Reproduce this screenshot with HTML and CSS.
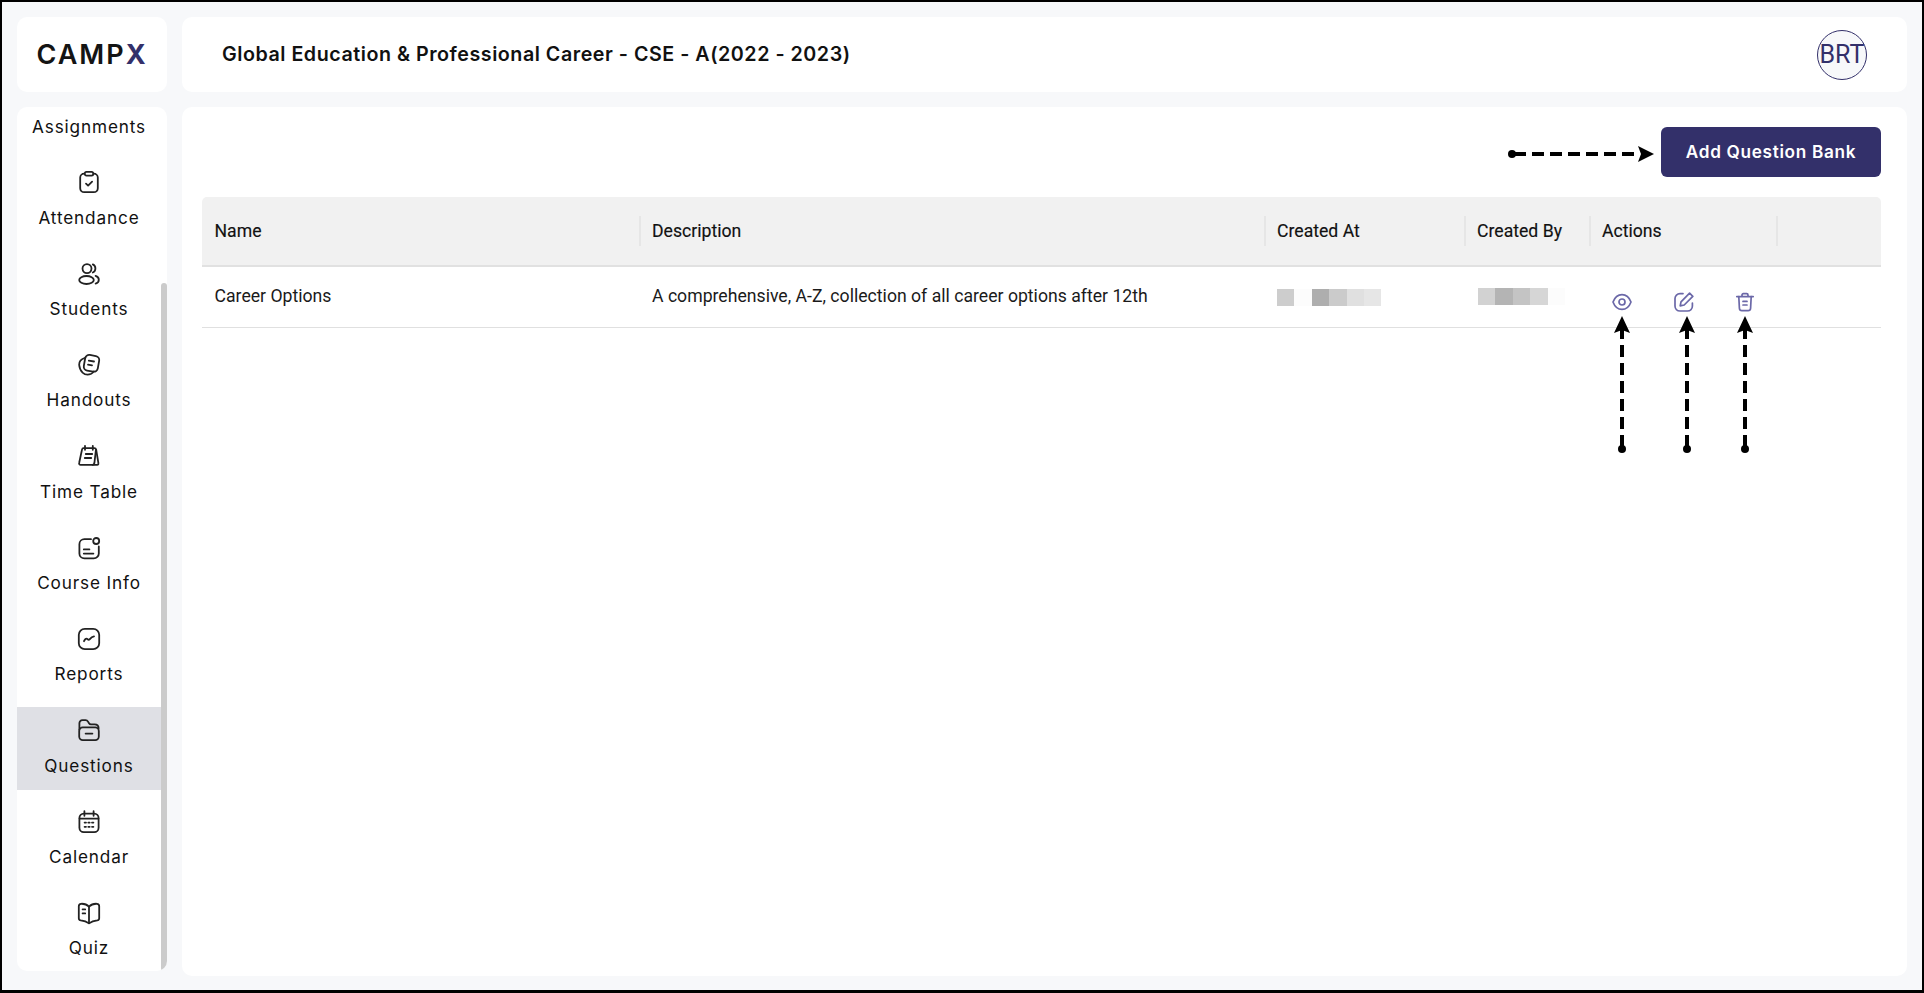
FILE: index.html
```html
<!DOCTYPE html>
<html lang="en">
<head>
<meta charset="utf-8">
<title>Question Bank</title>
<link rel="stylesheet" href="styles.css">
</head>
<body>
<div class="frame">
  <div class="logo-card"><span class="logo">CAMP<span class="logo-x">X</span></span></div>
  <header class="top-card">
    <h1 class="title">Global Education &amp; Professional Career - CSE - A(2022 - 2023)</h1>
    <div class="avatar">BRT</div>
  </header>
  <aside class="side-card">
    <nav class="nav">
      <a class="nav-item"><span class="nav-icon"></span><span class="nav-label">Assignments</span></a>
      <a class="nav-item">
        <svg class="nav-icon" viewBox="0 0 24 24"><rect x="3.2" y="3.6" width="17.6" height="18.6" rx="4"/><rect x="7.8" y="1.8" width="8.4" height="3.8" rx="1.6" class="solid"/><path d="M9 13.6l2.1 2 4-4"/></svg>
        <span class="nav-label">Attendance</span></a>
      <a class="nav-item">
        <svg class="nav-icon" viewBox="0 0 24 24"><circle cx="10" cy="6.6" r="4.5"/><ellipse cx="9.5" cy="18" rx="7.3" ry="4"/><path d="M15.8 2.4a4.4 4.4 0 0 1 2.6 4.1 4.4 4.4 0 0 1-2.6 4"/><path d="M18.6 13.8c2 .6 3.2 2.2 3.2 3.9s-1.2 3.3-3.2 3.9"/></svg>
        <span class="nav-label">Students</span></a>
      <a class="nav-item">
        <svg class="nav-icon" viewBox="0 0 24 24"><rect x="7.4" y="2.4" width="14.2" height="15.8" rx="4" transform="rotate(10 14.5 10.3)"/><path d="M7.6 5C4.4 6 2 8 2.2 12c.2 3 1.4 5.6 3.4 7.6 2 1.9 5.6 2.6 8.6 1.2 1.2-.6 2-1.4 2.6-2.4"/><path d="M11.8 7.6l5.2.9M11 11.6l4 .7"/></svg>
        <span class="nav-label">Handouts</span></a>
      <a class="nav-item">
        <svg class="nav-icon" viewBox="0 0 24 24"><path d="M6.4 4.200h11c1 0 1.600.8 1.800 1.600l2.200 13.400c.2.900-.4 1.600-1.200 1.600H3.600c-1.100 0-1.800-1-1.400-2L5 5.600c.2-.8.600-1.400 1.400-1.400z"/><path d="M8 1.800v4M15.800 1.800v4M18.900 6l-1.500 13c-.2 1-.8 1.800-1.800 1.800M8.800 10h6.400M7.800 14h6.400"/></svg>
        <span class="nav-label">Time Table</span></a>
      <a class="nav-item">
        <svg class="nav-icon" viewBox="0 0 24 24"><path d="M14 3.2H7.400a5 5 0 0 0-5 5v9.200a5 5 0 0 0 5 5h9.400a5 5 0 0 0 5-5v-7"/><circle cx="19.200" cy="5" r="3"/><path d="M6.800 13.400h5.600M6.800 17.600h9.600"/></svg>
        <span class="nav-label">Course Info</span></a>
      <a class="nav-item">
        <svg class="nav-icon" viewBox="0 0 24 24"><rect x="1.800" y="1.800" width="20.400" height="20.400" rx="6"/><path d="M7 14.200c1-2.200 2-3 3-2.400 1 .7 1.600 1.600 2.600.6 1-1.200 2-2.600 4.400-3"/></svg>
        <span class="nav-label">Reports</span></a>
      <a class="nav-item nav-item-active">
        <svg class="nav-icon" viewBox="0 0 24 24"><path d="M2.400 11.600V5.200c0-1.800 1.200-3 3-3h3.200c1.200 0 1.800.4 2.400 1.400l1 1.600c.5.8 1 1.200 2 1.200h3.600c2.400 0 4 1.400 4 3.800"/><rect x="2.200" y="9.400" width="19.600" height="12.800" rx="3.600"/><path d="M8.600 15.600h6.800"/></svg>
        <span class="nav-label">Questions</span></a>
      <a class="nav-item">
        <svg class="nav-icon" viewBox="0 0 24 24"><rect x="2.400" y="3.600" width="19.200" height="18.600" rx="4.400"/><path d="M7.400 1.200v4.600M16.600 1.200v4.600M2.600 8.600h18.800"/><path class="dots" d="M7.600 12.600h1.400M11.300 12.600h1.400M15 12.600h1.400M7.600 16.800h1.400M11.300 16.800h1.400M15 16.800h1.400"/></svg>
        <span class="nav-label">Calendar</span></a>
      <a class="nav-item">
        <svg class="nav-icon" viewBox="0 0 24 24"><path d="M12 5.600C10 3.600 7 2.600 4 2.800c-1.400.1-2.200 1-2.200 2.400v12c0 1.200.7 2 2 2.200 3 .3 5.800 1.200 8.200 3 2.400-1.800 5.200-2.700 8.200-3 1.300-.2 2-1 2-2.200v-12c0-1.400-.8-2.300-2.200-2.400-3-.2-6 .8-8 2.800z"/><path d="M12 5.600v16.600M5.600 8.400h2.600M5.600 12.400h2.600"/></svg>
        <span class="nav-label">Quiz</span></a>
    </nav>
    <div class="scroll-track"><div class="scroll-thumb"></div></div>
  </aside>
  <main class="main-card">
    <div class="toolbar"><button class="add-btn">Add Question Bank</button></div>
    <div class="table">
      <div class="table-row table-head">
        <div class="cell cell-first">Name</div>
        <div class="cell"><span class="head-label">Description</span></div>
        <div class="cell"><span class="head-label">Created At</span></div>
        <div class="cell"><span class="head-label">Created By</span></div>
        <div class="cell"><span class="head-label">Actions</span></div>
        <div class="cell"><span class="head-label"></span></div>
      </div>
      <div class="table-row table-body">
        <div class="cell cell-first">Career Options</div>
        <div class="cell cell-body">A comprehensive, A-Z, collection of all career options after 12th</div>
        <div class="cell cell-body">
          <div class="blur blur-at"><i class="px p1"></i><i class="px p2"></i><i class="px p3"></i><i class="px p4"></i><i class="px p5"></i><i class="px p6"></i></div>
        </div>
        <div class="cell cell-body">
          <div class="blur blur-by"><i class="px p7"></i><i class="px p8"></i><i class="px p9"></i><i class="px p10"></i><i class="px p2"></i></div>
        </div>
        <div class="cell-actions">
          <svg class="act" viewBox="0 0 20 20"><path d="M1 10C2.800 5.200 6 2.600 10 2.600S17.200 5.200 19 10C17.200 14.800 14 17.400 10 17.400S2.800 14.800 1 10z"/><circle cx="10" cy="10" r="3"/></svg>
          <svg class="act" viewBox="0 0 20 20"><path d="M9 1.600H6C3.200 1.600 1 3.800 1 6.600v7.400c0 2.800 2.200 5 5 5h7.400c2.800 0 5-2.200 5-5V11"/><path d="M15.600 1.200l3.200 3.200-8.600 8.600-4 .8.800-4z"/></svg>
          <svg class="act" viewBox="0 0 20 20"><path d="M1.800 4.600h16.400M7 4.400V3c0-.8.600-1.300 1.300-1.300h3.400c.7 0 1.300.5 1.300 1.300v1.400"/><path d="M3.800 4.600l.6 11.600c.1 1.500 1 2.400 2.500 2.400h6.200c1.500 0 2.400-.9 2.500-2.400l.6-11.600"/><path d="M8 9.400h4M8 13h4"/></svg>
        </div>
      </div>
    </div>
  </main>
  <svg class="annotations" viewBox="0 0 1924 993" width="1924" height="993">
    <g class="arrow-line">
      <path d="M1514 154H1640"/>
      <path d="M1622 447V330"/>
      <path d="M1687 447V330"/>
      <path d="M1745 447V330"/>
    </g>
    <g class="arrow-fill">
      <circle cx="1512" cy="154" r="4"/>
      <path d="M1654 154L1638 146L1641 154L1638 162z"/>
      <circle cx="1622" cy="449" r="4"/>
      <path d="M1622 316L1614 333L1622 330L1630 333z"/>
      <circle cx="1687" cy="449" r="4"/>
      <path d="M1687 316L1679 333L1687 330L1695 333z"/>
      <circle cx="1745" cy="449" r="4"/>
      <path d="M1745 316L1737 333L1745 330L1753 333z"/>
    </g>
  </svg>
</div>
</body>
</html>
```
FILE: styles.css
```css
* { box-sizing: border-box; }
html, body { margin: 0; padding: 0; }
body { width: 1924px; height: 993px; overflow: hidden; font-family: "Roboto", sans-serif; }

.frame {
  position: relative;
  width: 1924px;
  height: 993px;
  background: #f7f8fa;
  border-style: solid;
  border-color: #000;
  border-width: 2px 2px 3px 2px;
  padding: 15px 15px 14px 15px;
  display: grid;
  grid-template-columns: 150px 1fr;
  grid-template-rows: 75px 1fr;
  gap: 15px;
}

.logo-card, .top-card, .side-card, .main-card { background: #fff; border-radius: 10px; }

.logo-card { display: flex; align-items: center; justify-content: center; }
.logo { font-family: "Inter", sans-serif; font-weight: 600; font-size: 27px; letter-spacing: 2px; color: #141414; line-height: 1; }
.logo-x { color: #33306a; font-weight: 700; }

.top-card { display: flex; align-items: center; justify-content: space-between; padding: 0 40px 2px 40px; }
.title { margin: 0; font-family: "Inter", sans-serif; font-weight: 600; font-size: 19.7px; letter-spacing: 0.52px; color: #111; }
.avatar {
  width: 50px; height: 50px; border-radius: 50%; margin-top: 2px;
  border: 1px solid #33306a; background: #f7f8fa; color: #33306a;
  font-size: 25px; display: flex; align-items: center; justify-content: center;
}

.side-card { display: flex; overflow: hidden; margin-bottom: 5px; }
.nav { flex: 1; min-width: 0; overflow: hidden; display: flex; flex-direction: column; gap: 9px; }
.nav-item {
  flex: none;
  height: 82.33px;
  display: flex; flex-direction: column; align-items: center;
  padding-top: 11px;
  gap: 11.5px;
  color: #111;
}
.nav-item:first-child { margin-top: -39px; }
.nav-item-active { background: #dfe0e5; }
.nav-icon { width: 24px; height: 24px; flex: none; fill: none; stroke: #222; stroke-width: 1.8; stroke-linecap: round; stroke-linejoin: round; }
.nav-icon .solid { fill: #fff; }
.nav-item-active .nav-icon .solid { fill: #dfe0e5; }
.nav-icon .dots { stroke-width: 1.8; }
.nav-label { font-family: "Inter", sans-serif; font-size: 17.2px; line-height: 24px; letter-spacing: 0.85px; white-space: nowrap; }

.scroll-track { width: 6px; flex: none; padding-top: 176px; }
.scroll-thumb { height: 100%; background: #cbcbcb; border-radius: 3px; }

.main-card { padding: 20px 26px 0 20px; display: flex; flex-direction: column; min-width: 0; }
.toolbar { display: flex; justify-content: flex-end; height: 50px; margin-bottom: 20px; }
.add-btn {
  width: 220px; height: 50px; border: 0; border-radius: 6px; background: #33306a; color: #fff;
  font-family: "Inter", sans-serif; font-weight: 600; font-size: 17.2px; letter-spacing: 0.68px; padding: 0 0 2px;
}

.table-row { display: grid; grid-template-columns: 437px 625px 200px 125px 187px 1fr; }
.table-head { height: 70px; background: #f1f1f1; border-bottom: 2px solid #e1e1e1; border-radius: 5px 5px 0 0; font-size: 17.65px; color: #111; }
.table-head .cell { display: flex; align-items: center; }
.head-label { display: flex; align-items: center; height: 30px; border-left: 2px solid #e6e6e6; padding-left: 11px; width: 100%; font-weight: 400; -webkit-text-stroke: 0.15px #111; }
.cell-first { padding-left: 12.5px; }
.table-head .cell-first { -webkit-text-stroke: 0.15px #111; }
.table-body { height: 61px; border-bottom: 1px solid #e0e0e0; font-size: 17.65px; color: #1a1a1a; align-items: start; }
.table-body .cell { height: 58px; display: flex; align-items: center; }
.cell-body { padding-left: 13px; }

.blur { display: flex; height: 17px; }
.blur-at { margin-top: 3px; }
.blur-by { margin-top: 1px; margin-left: 1px; }
.px { display: block; width: 17.4px; height: 100%; }
.p1 { background: #cdcdcd; } .p2 { background: #fcfcfc; } .p3 { background: #aeaeae; }
.p4 { background: #cbcbcb; } .p5 { background: #e0e0e0; } .p6 { background: #e6e6e6; }
.p7 { background: #d2d2d2; } .p8 { background: #b4b4b4; } .p9 { background: #c4c4c4; } .p10 { background: #d6d6d6; }

.cell-actions { display: flex; gap: 41.5px; padding: 25px 0 0 23px; }
.act { width: 20px; height: 20px; flex: none; fill: none; stroke: #6b68a8; stroke-width: 1.7; stroke-linecap: round; stroke-linejoin: round; }

.annotations { position: absolute; left: -2px; top: -2px; pointer-events: none; }
.arrow-line { fill: none; stroke: #000; stroke-width: 4; stroke-dasharray: 12 6; }
.arrow-fill { fill: #000; }
```
